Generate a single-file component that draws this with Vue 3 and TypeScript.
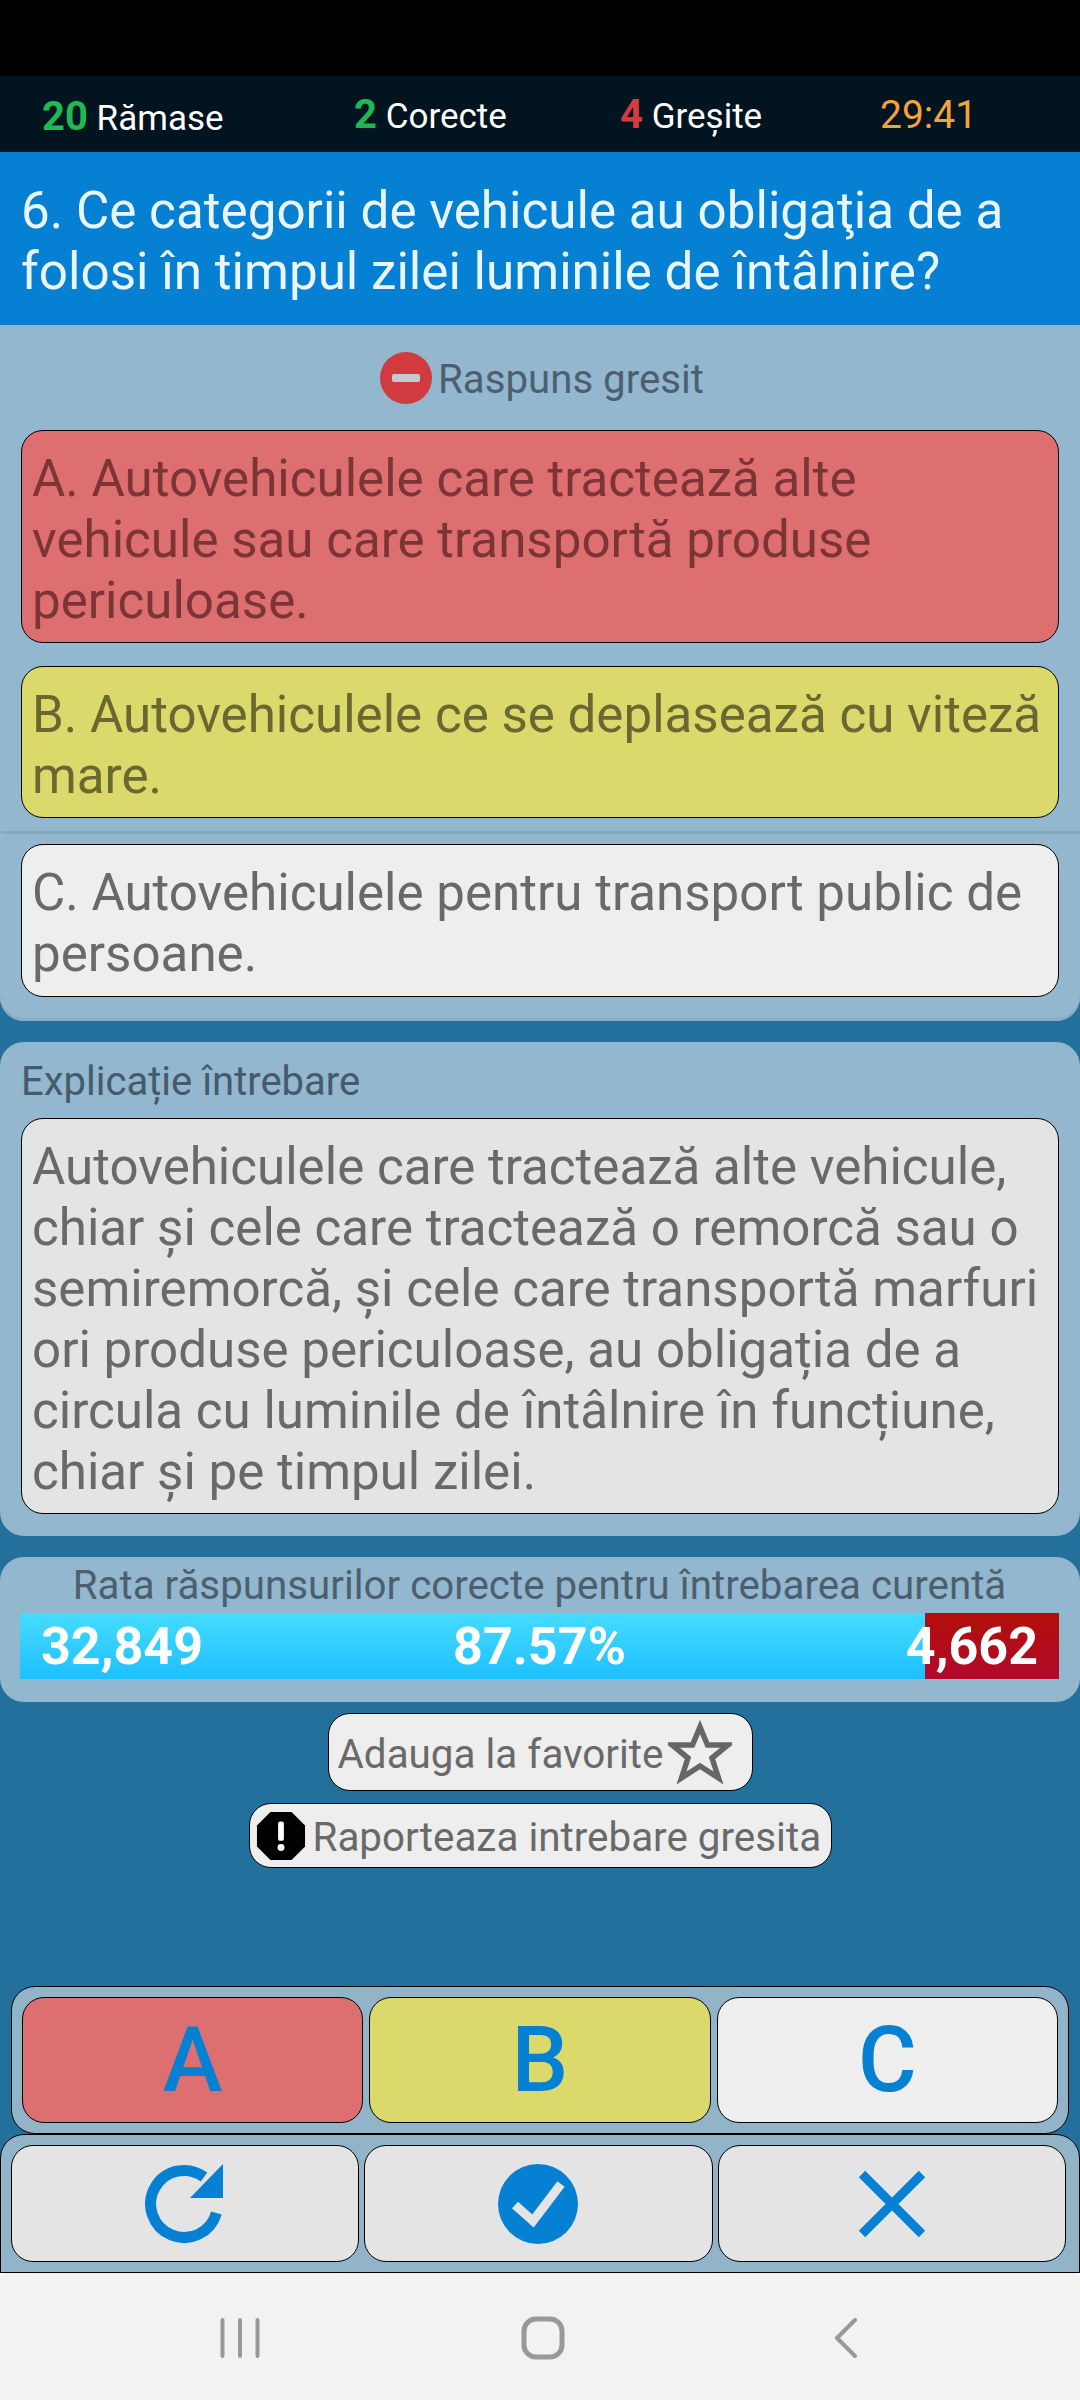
<template>
  <div class="screen">
    <div class="status-black"></div>
    <div class="stats">
      <span class="stat first"><b class="green">20</b> Rămase</span>
      <span class="stat second"><b class="green">2</b> Corecte</span>
      <span class="stat third"><b class="red">4</b> Greșite</span>
      <span class="stat timer">29:41</span>
    </div>
    <div class="question">6. Ce categorii de vehicule au obligaţia de a folosi în timpul zilei luminile de întâlnire?</div>

    <section class="panel answers">
      <div class="verdict">
        <svg class="minus" viewBox="0 0 52 52">
          <circle cx="26" cy="26" r="26" fill="#d13a3f" />
          <rect x="12" y="22" width="28" height="8" rx="2" fill="#c3c9d3" />
        </svg>
        <span>Raspuns gresit</span>
      </div>
      <div
        v-for="a in answers"
        :key="a.text"
        class="card"
        :class="a.cls"
      >{{ a.text }}</div>
    </section>

    <section class="panel explain">
      <div class="explain-title">Explicație întrebare</div>
      <div class="card grey">Autovehiculele care tractează alte vehicule, chiar și cele care tractează o remorcă sau o semiremorcă, și cele care transportă marfuri ori produse periculoase, au obligația de a circula cu luminile de întâlnire în funcțiune, chiar și pe timpul zilei.</div>
    </section>

    <section class="panel rate">
      <div class="rate-title">Rata răspunsurilor corecte pentru întrebarea curentă</div>
      <div class="bar">
        <div class="bar-good" :style="{ width: goodShare + '%' }"></div>
        <div class="bar-bad"></div>
        <div class="bar-labels">
          <span>32,849</span>
          <span class="pct">87.57%</span>
          <span class="bad-count">4,662</span>
        </div>
      </div>
    </section>

    <div class="actions">
      <div class="pill fav">
        <span>Adauga la favorite</span>
        <svg class="star" viewBox="0 0 64 64">
          <path d="M32 7 L39.5 25 L60 25 L44 38 L50.5 58 L32 46 L13.5 58 L20 38 L4 25 L24.5 25 Z" fill="none" stroke="#666" stroke-width="5.5" />
        </svg>
      </div>
      <div class="pill report">
        <svg class="octagon" viewBox="0 0 52 52">
          <path d="M15 1 H37 L51 15 V37 L37 51 H15 L1 37 V15 Z" fill="#000" />
          <rect x="23" y="11" width="6" height="20" rx="2" fill="#fff" />
          <circle cx="26" cy="38" r="3.6" fill="#fff" />
        </svg>
        <span>Raporteaza intrebare gresita</span>
      </div>
    </div>

    <div class="spacer"></div>

    <div class="button-row letters">
      <div class="big red-bg">A</div>
      <div class="big yellow-bg">B</div>
      <div class="big white-bg">C</div>
    </div>
    <div class="button-row tools">
      <div class="big grey-bg">
        <svg class="tool" viewBox="0 0 80 80">
          <path d="M71.4 49 A 33.5 33.5 0 1 1 59 13" fill="none" stroke="#0680d3" stroke-width="11" />
          <path d="M78 0 V34 H45 Z" fill="#0680d3" />
        </svg>
      </div>
      <div class="big grey-bg">
        <svg class="tool" viewBox="0 0 80 80">
          <circle cx="40" cy="40" r="40" fill="#0680d3" />
          <path d="M17 41 L35 57 L63 20" fill="none" stroke="#e4e4e4" stroke-width="9" />
        </svg>
      </div>
      <div class="big grey-bg">
        <svg class="tool" viewBox="0 0 80 80">
          <path d="M10 10 L70 70 M70 10 L10 70" fill="none" stroke="#0680d3" stroke-width="9" />
        </svg>
      </div>
    </div>

    <div class="nav">
      <svg class="nav-icon" viewBox="0 0 40 40">
        <path d="M2.5 2 V38 M20 2 V38 M37.5 2 V38" stroke="#999" stroke-width="4" stroke-linecap="round" fill="none" />
      </svg>
      <svg class="nav-icon" viewBox="0 0 44 44">
        <rect x="3" y="3" width="38" height="38" rx="12" stroke="#999" stroke-width="5" fill="none" />
      </svg>
      <svg class="nav-icon" viewBox="0 0 40 40">
        <path d="M29 2 L11 20 L29 38" stroke="#999" stroke-width="4" stroke-linecap="round" stroke-linejoin="round" fill="none" />
      </svg>
    </div>
  </div>
</template>

<script setup lang="ts">
const answers = [
  { text: 'A. Autovehiculele care tractează alte vehicule sau care transportă produse periculoase.', cls: 'wrong' },
  { text: 'B. Autovehiculele ce se deplasează cu viteză mare.', cls: 'picked' },
  { text: 'C. Autovehiculele pentru transport public de persoane.', cls: 'plain' },
]

const goodShare = (905 / 1039) * 100
</script>

<style>
html, body {
  margin: 0;
  background: #24709c;
}
</style>

<style scoped>
.screen {
  width: 1080px;
  height: 2400px;
  display: flex;
  flex-direction: column;
  background: #24709c;
  font-family: Roboto, "Liberation Sans", sans-serif;
  overflow: hidden;
}
.status-black {
  height: 76px;
  background: #000;
}
.stats {
  height: 76px;
  background: #021420;
  display: flex;
  align-items: center;
  color: #fff;
  font-size: 35px;
  box-sizing: border-box;
}
.stat b { font-weight: 700; font-size: 40px; }
.stat.first { margin-left: 42px; width: 312px; margin-top: 4px; }
.stat.second { width: 266px; }
.stat.third { width: 260px; }
.stat.timer { color: #f3a33a; font-size: 39px; margin-top: 2px; }
.green { color: #1db954; }
.red { color: #d63a3f; }
.question {
  height: 173px;
  box-sizing: border-box;
  background: #0680d3;
  color: #eaf6fd;
  font-size: 51.2px;
  line-height: 61px;
  padding: 28px 21px 0;
}
.panel {
  background: #92b7cf;
  border-radius: 24px;
}
.answers {
  height: 696px;
  box-sizing: border-box;
  border-radius: 0 0 24px 24px;
  box-shadow: inset 0 -3px #88aec6;
  padding: 0 21px;
  display: flex;
  flex-direction: column;
}
.verdict {
  height: 105px;
  display: flex;
  align-items: center;
  justify-content: center;
  gap: 6px;
  padding-left: 4px;
  color: #4d5f6f;
  font-size: 40.2px;
}
.verdict span { position: relative; top: 2px; }
.minus { width: 52px; height: 52px; }
.card {
  border: 1.5px solid #000;
  border-radius: 22px;
  box-sizing: border-box;
  font-size: 51.1px;
  line-height: 61px;
  padding: 17px 10px 11px;
  color: #696969;
}
.wrong { background: #dd6f71; color: #7c3436; height: 213px; }
.picked { background: #dcd96c; color: #696830; height: 152px; margin-top: 23px; }
.plain { background: #eeeeee; height: 153px; margin-top: 26px; position: relative; }
.plain::before {
  content: "";
  position: absolute;
  left: -21px;
  width: 1080px;
  top: -14px;
  height: 3px;
  background: #84a9bd;
}
.explain {
  margin-top: 21px;
  height: 494px;
  box-sizing: border-box;
  padding: 0 21px;
  display: flex;
  flex-direction: column;
}
.explain-title {
  height: 79px;
  margin-bottom: -3px;
  display: flex;
  align-items: center;
  color: #455a6b;
  font-size: 40px;
}
.grey { background: #e4e4e4; height: 396px; }
.rate {
  margin-top: 21px;
  height: 145px;
  box-sizing: border-box;
  padding: 0 21px 0 20px;
}
.rate-title {
  height: 56px;
  display: flex;
  align-items: center;
  justify-content: center;
  color: #4d5f6f;
  font-size: 40.3px;
}
.bar {
  position: relative;
  height: 66px;
  display: flex;
}
.bar-good { background: linear-gradient(#45dcff, #1fbfff); }
.bar-bad { flex: 1; background: linear-gradient(#b30f0a, #b00a2a); }
.bar-labels {
  position: absolute;
  inset: 0;
  display: grid;
  grid-template-columns: 1fr auto 1fr;
  align-items: center;
  padding: 0 21px;
  color: #fff;
  font-size: 52px;
  font-weight: 700;
}
.bad-count { text-align: right; }
.actions {
  display: flex;
  flex-direction: column;
  align-items: center;
  margin-top: 11px;
  gap: 12px;
}
.pill {
  display: flex;
  align-items: center;
  box-sizing: border-box;
  background: #eeeeee;
  border: 1.5px solid #000;
  border-radius: 22px;
  color: #696969;
  font-size: 40.4px;
}
.pill span { position: relative; top: 2px; }
.fav { width: 425px; height: 78px; padding: 0 9px; gap: 4px; }
.report { width: 583px; height: 65px; padding: 0 6px; gap: 7px; }
.star { width: 64px; height: 64px; }
.octagon { width: 50px; height: 50px; flex: none; }
.spacer { flex: 1; }
.button-row {
  display: grid;
  grid-template-columns: 1fr 1fr 1fr;
  box-sizing: border-box;
  background: #92b4c8;
  border: 1.5px solid #000;
  border-radius: 24px;
}
.letters {
  height: 148px;
  margin: 0 11px;
  padding: 10px;
  gap: 6px;
}
.tools {
  height: 139px;
  padding: 10px 13px 10px 9.5px;
  gap: 5px;
  border-radius: 24px 24px 0 0;
}
.big {
  display: flex;
  align-items: center;
  justify-content: center;
  border: 1.5px solid #000;
  border-radius: 22px;
  color: #0680d3;
  font-size: 90px;
  font-weight: 500;
}
.red-bg { background: #dd6f71; }
.yellow-bg { background: #dcd96c; }
.white-bg { background: #eeeeee; }
.grey-bg { background: #e4e4e4; }
.tool { width: 80px; height: 80px; }
.nav {
  height: 127px;
  background: #f2f2f2;
  display: flex;
  align-items: center;
  padding-top: 3px;
  box-sizing: border-box;
}
.nav-icon { width: 40px; height: 40px; }
.nav-icon:nth-child(1) { margin-left: 220px; }
.nav-icon:nth-child(2) { margin-left: 261px; width: 44px; height: 44px; }
.nav-icon:nth-child(3) { margin-left: 261px; }
</style>
